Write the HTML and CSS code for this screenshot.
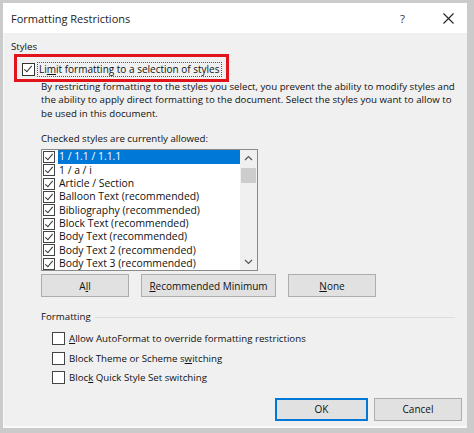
FILE: index.html
```html
<!DOCTYPE html>
<html lang="en">
<head>
    <meta charset="UTF-8">
    <title>Formatting Restrictions</title>
    <link rel="stylesheet" href="styles.css">
</head>
<body>
    <div class="dialog">
        <div class="titlebar">
            <span class="title">Formatting Restrictions</span>
            <span class="help">?</span>
            <span class="close">
                <svg width="11" height="11" viewBox="0 0 11 11"><path d="M0.5 0.5 L10.5 10.5 M10.5 0.5 L0.5 10.5" stroke="#222" stroke-width="1.1" fill="none"/></svg>
            </span>
        </div>
        <div class="content">
            <div class="group-label">Styles</div>
            <div class="limit-row">
                <span class="check checked"></span>
                <span class="focus-label">Li<u>m</u>it formatting to a selection of styles</span>
                <div class="highlight"></div>
            </div>
            <p class="desc">By restricting formatting to the styles you select, you prevent the ability to modify styles and the ability to apply direct formatting to the document. Select the styles you want to allow to be used in this document.</p>
            <div class="list-label">Checked styles are currently allowed:</div>
            <div class="listbox">
                <ul class="items">
                    <li class="selected"><span class="check checked"></span><span class="item-text">1 / 1.1 / 1.1.1</span></li>
                    <li><span class="check checked"></span><span class="item-text">1 / a / i</span></li>
                    <li><span class="check checked"></span><span class="item-text">Article / Section</span></li>
                    <li><span class="check checked"></span><span class="item-text">Balloon Text (recommended)</span></li>
                    <li><span class="check checked"></span><span class="item-text">Bibliography (recommended)</span></li>
                    <li><span class="check checked"></span><span class="item-text">Block Text (recommended)</span></li>
                    <li><span class="check checked"></span><span class="item-text">Body Text (recommended)</span></li>
                    <li><span class="check checked"></span><span class="item-text">Body Text 2 (recommended)</span></li>
                    <li><span class="check checked"></span><span class="item-text">Body Text 3 (recommended)</span></li>
                </ul>
                <div class="scrollbar">
                    <span class="arrow">
                        <svg width="9" height="6" viewBox="0 0 9 6"><path d="M1 5 L4.5 1.5 L8 5" stroke="#555" stroke-width="1.2" fill="none"/></svg>
                    </span>
                    <div class="track"><div class="thumb"></div></div>
                    <span class="arrow">
                        <svg width="9" height="6" viewBox="0 0 9 6"><path d="M1 1 L4.5 4.5 L8 1" stroke="#555" stroke-width="1.2" fill="none"/></svg>
                    </span>
                </div>
            </div>
            <div class="btn-row">
                <button class="btn btn-all">A<u>l</u>l</button>
                <button class="btn btn-rec"><u>R</u>ecommended Minimum</button>
                <button class="btn btn-none"><u>N</u>one</button>
            </div>
            <div class="group-head">
                <span>Formatting</span>
                <span class="group-line"></span>
            </div>
            <div class="options">
                <label class="option"><span class="check"></span><span><u>A</u>llow AutoFormat to override formatting restrictions</span></label>
                <label class="option"><span class="check"></span><span>Block Theme or Scheme s<u>w</u>itching</span></label>
                <label class="option"><span class="check"></span><span>Bloc<u>k</u> Quick Style Set switching</span></label>
            </div>
            <div class="footer">
                <button class="btn btn-ok">OK</button>
                <button class="btn btn-cancel">Cancel</button>
            </div>
        </div>
    </div>
</body>
</html>
```

FILE: styles.css
```css
/* dialog */
body {
    margin: 0;
    padding: 3px 0 0 3px;
    background-color: #cbcbcb;
    font-family: "Open Sans", "Noto Sans", sans-serif;
    font-size: 9.7px;
    color: #111;
}
.dialog {
    width: 464px;
    height: 425px;
    background-color: #f0f0f0;
    box-shadow: inset 1px 0 0 #fafafa, inset 0 -2px 0 #fafafa;
    display: flex;
    flex-direction: column;
}
.titlebar {
    height: 30px;
    background-color: #fff;
    display: flex;
    align-items: center;
    padding-left: 8px;
}
.title {
    font-size: 11px;
    color: #222;
    flex: 1;
}
.help {
    font-size: 11.5px;
    color: #333;
    width: 14px;
    margin-right: 29px;
}
.close {
    display: flex;
    margin-right: 13px;
}
.content {
    padding: 7px 8px 0 8px;
    display: flex;
    flex-direction: column;
}
.group-label,
.list-label,
.group-head {
    line-height: 14px;
}
.limit-row {
    position: relative;
    height: 22px;
    margin-top: 4px;
    margin-left: 11px;
    display: flex;
    align-items: center;
}
.highlight {
    position: absolute;
    left: -8px;
    top: -4px;
    width: 209px;
    height: 22px;
    border: 3px solid #e1141b;
}
.focus-label {
    margin-left: 2px;
    padding: 0 1px;
    border: 1px dotted #555;
    line-height: 13px;
    font-size: 10px;
}
.check {
    display: inline-block;
    width: 11px;
    height: 11px;
    border: 1px solid #333;
    background-color: #fff;
    position: relative;
    flex-shrink: 0;
}
.check.checked::after {
    content: "";
    position: absolute;
    left: 3px;
    top: 0px;
    width: 3px;
    height: 7px;
    border-right: 1.1px solid #333;
    border-bottom: 1.1px solid #333;
    transform: rotate(40deg);
}
.desc {
    margin: 0 -6px 0 30px;
    line-height: 13.4px;
}
.list-label {
    margin: 12px 0 0 30px;
}
.listbox {
    margin: 3px 0 0 30px;
    width: 215px;
    height: 120px;
    border: 1px solid #8a8a8a;
    background-color: #fff;
    display: flex;
}
.items {
    list-style: none;
    margin: 0;
    padding: 0;
    flex: 1;
    font-size: 10.4px;
}
.items li {
    height: 13.35px;
    display: flex;
    align-items: center;
    padding-left: 1px;
}
.items .check {
    width: 10px;
    height: 10px;
    border-color: #444;
}
.item-text {
    margin-left: 3px;
    padding-left: 1px;
    flex: 1;
    line-height: 13.35px;
}
.items li.selected .item-text {
    background-color: #0078d7;
    color: #fff;
}
.scrollbar {
    width: 17px;
    background-color: #f0f0f0;
    display: flex;
    flex-direction: column;
}
.arrow {
    height: 16px;
    display: flex;
    align-items: center;
    justify-content: center;
}
.track {
    flex: 1;
}
.thumb {
    margin: 2px 1px 0 1px;
    height: 15px;
    background-color: #cdcdcd;
}
.btn {
    font-family: inherit;
    font-size: 10px;
    color: #111;
    height: 23px;
    background-color: #e1e1e1;
    border: 1px solid #adadad;
    padding: 0;
}
.btn-row {
    display: flex;
    gap: 12px;
    margin: 3px 0 0 30px;
}
.btn-all { width: 88px; }
.btn-rec { width: 135px; }
.btn-none { width: 88px; }
.group-head {
    display: flex;
    align-items: center;
    margin: 13px 0 0 30px;
}
.group-line {
    flex: 1;
    height: 1px;
    background-color: #dcdcdc;
    margin-left: 4px;
    margin-right: 4px;
}
.options {
    margin: 5px 0 0 41px;
    display: flex;
    flex-direction: column;
}
.option {
    height: 19.5px;
    display: flex;
    align-items: center;
    gap: 4px;
}
.option .check {
    width: 11px;
    height: 11px;
    border-color: #444;
}
.footer {
    display: flex;
    justify-content: flex-end;
    gap: 6px;
    margin: 10px -3px 0 0;
}
.btn-ok {
    width: 93px;
    border: 2px solid #0078d7;
}
.btn-cancel {
    width: 88px;
}
```
